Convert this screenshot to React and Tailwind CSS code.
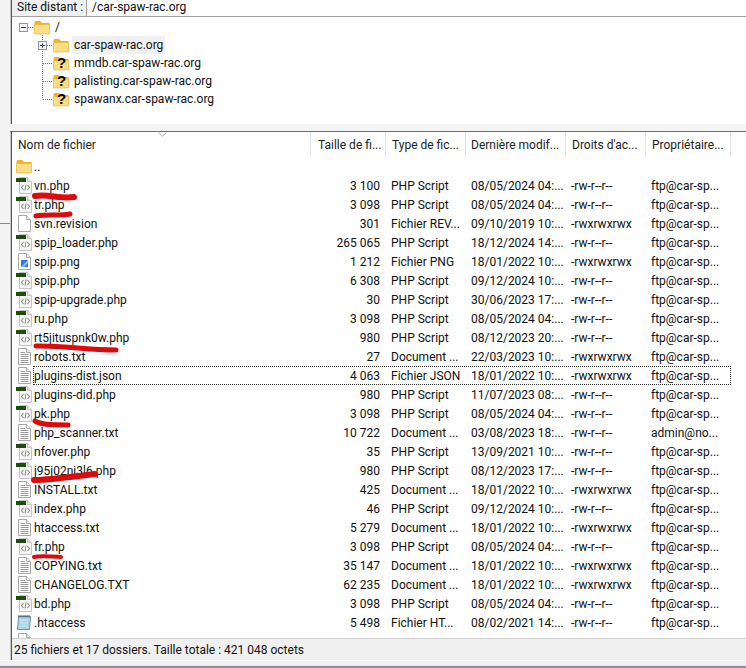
const FONT = "font-['Roboto','Open_Sans',sans-serif]";

const rows = [
  ["..", "", "", "", "", "", "folder"],
  ["vn.php", "3 100", "PHP Script", "08/05/2024 04:...", "-rw-r--r--", "ftp@car-sp...", "php"],
  ["tr.php", "3 098", "PHP Script", "08/05/2024 04:...", "-rw-r--r--", "ftp@car-sp...", "php"],
  ["svn.revision", "301", "Fichier REV...", "09/10/2019 10:...", "-rwxrwxrwx", "ftp@car-sp...", "blank"],
  ["spip_loader.php", "265 065", "PHP Script", "18/12/2024 14:...", "-rw-r--r--", "ftp@car-sp...", "php"],
  ["spip.png", "1 212", "Fichier PNG", "18/01/2022 10:...", "-rwxrwxrwx", "ftp@car-sp...", "png"],
  ["spip.php", "6 308", "PHP Script", "09/12/2024 10:...", "-rw-r--r--", "ftp@car-sp...", "php"],
  ["spip-upgrade.php", "30", "PHP Script", "30/06/2023 17:...", "-rw-r--r--", "ftp@car-sp...", "php"],
  ["ru.php", "3 098", "PHP Script", "08/05/2024 04:...", "-rw-r--r--", "ftp@car-sp...", "php"],
  ["rt5jituspnk0w.php", "980", "PHP Script", "08/12/2023 20:...", "-rw-r--r--", "ftp@car-sp...", "php"],
  ["robots.txt", "27", "Document ...", "22/03/2023 10:...", "-rwxrwxrwx", "ftp@car-sp...", "text"],
  ["plugins-dist.json", "4 063", "Fichier JSON", "18/01/2022 10:...", "-rwxrwxrwx", "ftp@car-sp...", "text"],
  ["plugins-did.php", "980", "PHP Script", "11/07/2023 08:...", "-rw-r--r--", "ftp@car-sp...", "php"],
  ["pk.php", "3 098", "PHP Script", "08/05/2024 04:...", "-rw-r--r--", "ftp@car-sp...", "php"],
  ["php_scanner.txt", "10 722", "Document ...", "03/08/2023 18:...", "-rw-r--r--", "admin@no...", "text"],
  ["nfover.php", "35", "PHP Script", "13/09/2021 10:...", "-rw-r--r--", "ftp@car-sp...", "php"],
  ["j95j02nj3l6.php", "980", "PHP Script", "08/12/2023 17:...", "-rw-r--r--", "ftp@car-sp...", "php"],
  ["INSTALL.txt", "425", "Document ...", "18/01/2022 10:...", "-rwxrwxrwx", "ftp@car-sp...", "text"],
  ["index.php", "46", "PHP Script", "09/12/2024 10:...", "-rw-r--r--", "ftp@car-sp...", "php"],
  ["htaccess.txt", "5 279", "Document ...", "18/01/2022 10:...", "-rwxrwxrwx", "ftp@car-sp...", "text"],
  ["fr.php", "3 098", "PHP Script", "08/05/2024 04:...", "-rw-r--r--", "ftp@car-sp...", "php"],
  ["COPYING.txt", "35 147", "Document ...", "18/01/2022 10:...", "-rwxrwxrwx", "ftp@car-sp...", "text"],
  ["CHANGELOG.TXT", "62 235", "Document ...", "18/01/2022 10:...", "-rwxrwxrwx", "ftp@car-sp...", "text"],
  ["bd.php", "3 098", "PHP Script", "08/05/2024 04:...", "-rw-r--r--", "ftp@car-sp...", "php"],
  [".htaccess", "5 498", "Fichier HT...", "08/02/2021 14:...", "-rw-r--r--", "ftp@car-sp...", "note"],
];

function Folder() {
  return (
    <svg width="16" height="15" viewBox="0 0 16 15" className="shrink-0">
      <path d="M0.5 2.5 Q0.5 1 2 1 H6 L8 3 H15.5 V13.5 H0.5 Z" fill="#f2b226" />
      <path d="M0.5 4.5 H15.5 V13 Q15.5 14 14.5 14 H1.5 Q0.5 14 0.5 13 Z" fill="#fcdc84" stroke="#e8b336" strokeWidth="0.6" />
    </svg>
  );
}

function Page({ children }) {
  return (
    <svg width="16" height="17" viewBox="0 0 16 17" className="shrink-0">
      <path d="M2.5 0.5 H10.5 L14.5 4.5 V16.5 H2.5 Z" fill="#fff" stroke="#a8a8a8" />
      <path d="M10.5 0.5 V4.5 H14.5" fill="#f0f0f0" stroke="#a8a8a8" />
      {children}
    </svg>
  );
}

function FileIcon({ kind }) {
  if (kind === "folder") return <Folder />;
  if (kind === "blank") return <Page />;
  if (kind === "text")
    return (
      <Page>
        <path d="M4.5 4.5 H9 M4.5 6.5 H12.5 M4.5 8.5 H12.5 M4.5 10.5 H12.5 M4.5 12.5 H12.5 M4.5 14.5 H12.5" stroke="#999" />
      </Page>
    );
  if (kind === "png")
    return (
      <Page>
        <rect x="5" y="7" width="7" height="7" fill="#2b7de0" />
        <path d="M5 14 L12 7 V10 L8 14 Z" fill="#8cc4f5" />
      </Page>
    );
  if (kind === "note")
    return (
      <svg width="16" height="17" viewBox="0 0 16 17" className="shrink-0">
        <path d="M2.5 2.5 H14.5 L13.5 15.5 H1.5 Z" fill="#a9d6e6" stroke="#6b97a8" />
        <path d="M3 1 V3.5 M5 1 V3.5 M7 1 V3.5 M9 1 V3.5 M11 1 V3.5 M13 1 V3.5" stroke="#555" />
        <path d="M4 6 H12 M4 9 H12 M3.5 12 H12" stroke="#cfeaf3" />
      </svg>
    );
  return (
    <svg width="17" height="17" viewBox="0 0 17 17" className="shrink-0">
      <path d="M3.5 0.5 H11.5 L15.5 4.5 V16.5 H3.5 Z" fill="#f6f6f6" stroke="#c4c4c4" />
      <path d="M11.5 0.5 V4.5 H15.5" fill="#e8e8e8" stroke="#c4c4c4" />
      <path d="M7.5 8 L5.5 10.5 L7.5 13 M11.5 8 L13.5 10.5 L11.5 13" fill="none" stroke="#8a8a8a" strokeWidth="1.1" />
      <path d="M10 7.5 L9 13.5" stroke="#8a8a8a" />
      <rect x="0" y="1" width="10" height="4" fill="#1f4d0b" />
    </svg>
  );
}

function QFolder() {
  return (
    <span className="relative block w-4 h-[15px] shrink-0">
      <Folder />
      <span className="absolute left-[4px] -top-[2px] font-['Liberation_Sans'] font-bold text-[15px] leading-[18px] text-black">?</span>
    </span>
  );
}

function ExpandBox({ minus }) {
  return (
    <svg width="9" height="9" viewBox="0 0 9 9" className="shrink-0">
      <rect x="0.5" y="0.5" width="8" height="8" fill="#f4f6f9" stroke="#8c97a8" />
      <path d={minus ? "M2 4.5 H7" : "M2 4.5 H7 M4.5 2 V7"} stroke="#334" />
    </svg>
  );
}

function TreeChild({ label, selected }) {
  return (
    <div className="h-[18px] flex items-center pl-[26px]">
      <span className="w-[9px] shrink-0 flex">{selected && <ExpandBox />}</span>
      <span className="w-[6px] shrink-0" />
      {selected ? <Folder /> : <QFolder />}
      <span className={`ml-[3px] px-[2px] h-[18px] leading-[18px] ${selected ? "bg-[#f0f0f0]" : ""}`}>{label}</span>
    </div>
  );
}

const scribbles = [
  ["M35 196 C50 194 58 199 74 197", 6],
  ["M36 216 C48 214 60 216 70 214", 5],
  ["M36 346 C60 345 85 350 116 350", 5],
  ["M35 421 C42 426 55 424 68 425", 5],
  ["M34 480 C50 480 70 477 95 474", 6],
  ["M34 557 C42 555 52 557 61 557", 4],
];

const cols = [
  ["Taille de fi...", "w-[75px] pl-[7px]"],
  ["Type de fic...", "w-[80px] pl-[6px]"],
  ["Dernière modif...", "w-[100px] pl-[5px]"],
  ["Droits d'ac...", "w-[80px] pl-[6px]"],
  ["Propriétaire...", "w-[85px] pl-[6px]"],
];

export default function App() {
  return (
    <div className={`${FONT} relative w-[746px] h-[668px] overflow-hidden bg-[#f4f4f4] text-[12px] text-[#111] flex flex-col`}>
      <div className="flex flex-col pl-[11px] h-[124px] shrink-0">
        <div className="flex flex-col flex-1 border-l border-[#555] shadow-[-1px_0_0_#c8c8c8] bg-white">
          <div className="h-[17px] flex shrink-0 border-b border-[#a0a0a0]">
            <div className="w-[75px] bg-[#f0f0f0] border-r border-[#a0a0a0] pl-[5px] leading-[14px]">Site distant :</div>
            <div className="pl-[5px] leading-[14px]">/car-spaw-rac.org</div>
          </div>
          <div className="relative flex-1 pt-[1px]">
            <svg width="80" height="90" className="absolute left-0 top-0">
              <path d="M16 10.5 H22 M30.5 18 V82.5 M35 28.5 H41 M31 46.5 H41 M31 64.5 H41 M31 82.5 H41" stroke="#777" strokeDasharray="1 1" fill="none" />
            </svg>
            <div className="h-[18px] flex items-center pl-[7px]">
              <ExpandBox minus />
              <span className="w-[6px]" />
              <Folder />
              <span className="ml-[5px]">/</span>
            </div>
            <TreeChild label="car-spaw-rac.org" selected />
            <TreeChild label="mmdb.car-spaw-rac.org" />
            <TreeChild label="palisting.car-spaw-rac.org" />
            <TreeChild label="spawanx.car-spaw-rac.org" />
          </div>
        </div>
      </div>
      <div className="h-[8px] shrink-0 border-b border-[#707070] ml-[10px]" />
      <div className="flex-1 flex flex-col pl-[11px] min-h-0">
        <div className="flex-1 flex flex-col border-l border-[#555] shadow-[-1px_0_0_#c8c8c8] bg-white min-h-0">
          <div className="relative h-[25px] flex shrink-0 text-[#222]">
            <svg width="10" height="5" className="absolute left-[146px] top-0">
              <path d="M0.5 0.5 L4.5 4 L8.5 0.5" fill="none" stroke="#9aa" />
            </svg>
            <div className="w-[299px] border-r border-[#e5e5e5] pl-[6px] leading-[27px]">Nom de fichier</div>
            {cols.map(([c, w]) => (
              <div key={c} className={`${w} border-r border-[#e5e5e5] leading-[27px] whitespace-nowrap overflow-hidden`}>{c}</div>
            ))}
          </div>
          <div className="flex-1 overflow-hidden min-h-0">
            {rows.map((r) => (
              <div key={r[0]} className="h-[19px] flex items-center whitespace-nowrap">
                <span className="w-[21px] pl-[3px] flex justify-center shrink-0"><FileIcon kind={r[6]} /></span>
                <div className={`h-[19px] flex items-center ${r[0] === "plugins-dist.json" ? "outline-1 -outline-offset-1 outline-dotted outline-[#333]" : ""}`}>
                  <div className="w-[278px] pl-[1px]">{r[0]}</div>
                  <div className="w-[75px] text-right pr-[6px]">{r[1]}</div>
                  <div className="w-[80px] pl-[5px]">{r[2]}</div>
                  <div className="w-[100px] pl-[5px]">{r[3]}</div>
                  <div className="w-[80px] pl-[5px]">{r[4]}</div>
                  <div className="w-[85px] pl-[5px]">{r[5]}</div>
                </div>
              </div>
            ))}
            <div className="h-[19px] flex items-center pl-[4px]"><FileIcon kind="blank" /></div>
          </div>
          <div className="h-[22px] shrink-0 bg-[#f0f0f0] border-t border-[#d0d0d0] pl-[2px] leading-[22px]">25 fichiers et 17 dossiers. Taille totale : 421 048 octets</div>
        </div>
      </div>
      <div className="h-[8px] shrink-0 bg-[#f0f0f0] border-b-2 border-[#8a8a9a] border-t border-t-white" />
      <div className="absolute left-0 top-[223px] w-[10px] h-px bg-[#888]" />
      <svg width="746" height="668" className="absolute left-0 top-0 pointer-events-none blur-[0.6px]">
        {scribbles.map(([d, w]) => (
          <path key={d} d={d} fill="none" stroke="#dc0a0a" strokeWidth={w} strokeLinecap="round" />
        ))}
      </svg>
    </div>
  );
}
